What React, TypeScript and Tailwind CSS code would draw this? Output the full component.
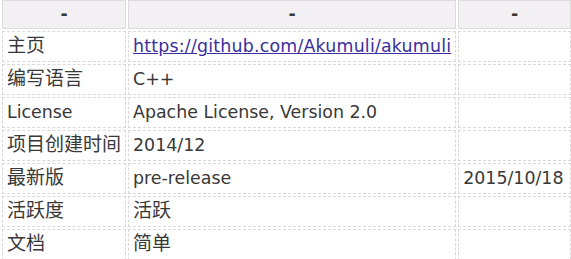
const rows: { k: string; v: string; link?: boolean; extra?: string }[] = [
  { k: "主页", v: "https://github.com/Akumuli/akumuli", link: true },
  { k: "编写语言", v: "C++" },
  { k: "License", v: "Apache License, Version 2.0" },
  { k: "项目创建时间", v: "2014/12" },
  { k: "最新版", v: "pre-release", extra: "2015/10/18" },
  { k: "活跃度", v: "活跃" },
  { k: "文档", v: "简单" },
];

const cell = "border border-dashed border-[#d9d9d9] px-[4px] h-[31px] whitespace-nowrap";

// CJK glyphs render a bit larger than the latin text in the original
const Txt = ({ s }: { s: string }) =>
  /[\u4e00-\u9fff]/.test(s) ? <span className="text-[19px] leading-none">{s}</span> : <>{s}</>;

export default function App() {
  return (
    <div className="w-[571px] h-[259px] overflow-hidden bg-white text-[#383838] font-['DejaVu_Sans','Noto_Sans_CJK_SC',sans-serif] text-[17.4px]">
      <table className="border-separate border-spacing-[2px] -mt-[2px] w-[573px]">
        <thead>
          <tr>
            <th className="h-[29px] w-[124px] border border-[#dcdcdc] bg-[#f3f0f3] font-bold text-center">-</th>
            <th className="h-[29px] w-[328px] border border-[#dcdcdc] bg-[#f3f0f3] font-bold text-center">-</th>
            <th className="h-[29px] border border-[#dcdcdc] bg-[#f3f0f3] font-bold text-center">-</th>
          </tr>
        </thead>
        <tbody>
          {rows.map((r) => (
            <tr key={r.k}>
              <td className={cell}>
                <Txt s={r.k} />
              </td>
              <td className={cell}>
                {r.link ? (
                  <a href={r.v} className="text-[#3b2f9e] underline tracking-[0.2px]">
                    {r.v}
                  </a>
                ) : (
                  <Txt s={r.v} />
                )}
              </td>
              <td className={cell}>{r.extra ?? ""}</td>
            </tr>
          ))}
        </tbody>
      </table>
    </div>
  );
}
